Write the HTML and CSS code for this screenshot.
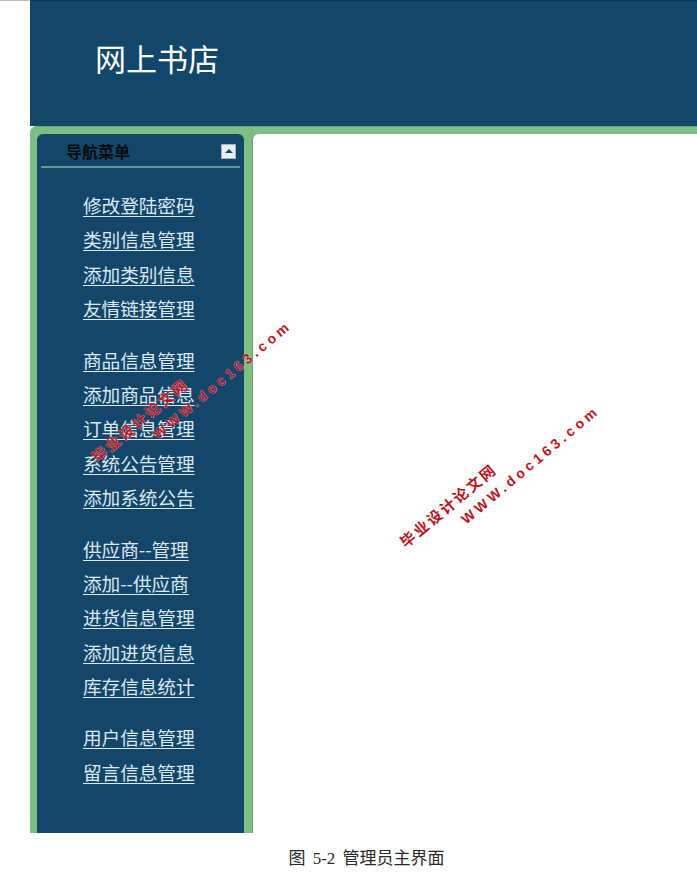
FILE: index.html
```html
<!DOCTYPE html>
<html lang="zh-CN">
<head>
    <meta charset="UTF-8">
    <meta name="viewport" content="width=device-width, initial-scale=1.0">
    <title>网上书店 - 管理员主界面</title>
    <link rel="stylesheet" href="styles.css">
</head>
<body>
    <div class="page">
        <div class="top-rule"></div>
        <div class="frame">
            <header class="banner">
                <h1>网上书店</h1>
            </header>
            <div class="workspace">
                <aside class="sidebar">
                    <div class="menu-head">
                        <span class="menu-title">导航菜单</span>
                        <span class="menu-toggle"></span>
                    </div>
                    <ul class="menu-group first">
                        <li><a href="#">修改登陆密码</a></li>
                        <li><a href="#">类别信息管理</a></li>
                        <li><a href="#">添加类别信息</a></li>
                        <li><a href="#">友情链接管理</a></li>
                    </ul>
                    <ul class="menu-group">
                        <li><a href="#">商品信息管理</a></li>
                        <li><a href="#">添加商品信息</a></li>
                        <li><a href="#">订单信息管理</a></li>
                        <li><a href="#">系统公告管理</a></li>
                        <li><a href="#">添加系统公告</a></li>
                    </ul>
                    <ul class="menu-group">
                        <li><a href="#">供应商--管理</a></li>
                        <li><a href="#">添加--供应商</a></li>
                        <li><a href="#">进货信息管理</a></li>
                        <li><a href="#">添加进货信息</a></li>
                        <li><a href="#">库存信息统计</a></li>
                    </ul>
                    <ul class="menu-group">
                        <li><a href="#">用户信息管理</a></li>
                        <li><a href="#">留言信息管理</a></li>
                    </ul>
                </aside>
                <main class="content"></main>
            </div>
        </div>
        <p class="caption">图 5-2 管理员主界面</p>

        <!-- 水印 -->
        <span class="mark mark-cn mark-a1">毕业设计论文网</span>
        <span class="mark mark-en mark-a2">WWW.doc163.com</span>
        <span class="mark mark-cn mark-b1">毕业设计论文网</span>
        <span class="mark mark-en mark-b2">WWW.doc163.com</span>
    </div>
</body>
</html>
```

FILE: styles.css
```css
body {
    margin: 0;
    padding: 0;
    background-color: #fff;
    font-family: "Noto Sans CJK SC", "Liberation Sans", sans-serif;
}
.page {
    position: relative;
    width: 697px;
    height: 876px;
    overflow: hidden;
}
.top-rule {
    position: absolute;
    left: 0;
    top: 0;
    width: 29px;
    height: 1px;
    background-color: #b9bcc0;
}
.frame {
    margin-left: 30px;
}
.banner {
    height: 126px;
    background-color: #13466b;
    border-top: 1px solid #0e3552;
    box-sizing: border-box;
    padding: 36px 0 0 65px;
}
.banner h1 {
    margin: 0;
    font-size: 31px;
    font-weight: normal;
    line-height: 42px;
    color: #fff;
}
.workspace {
    display: flex;
    height: 707px;
    padding-top: 7px;
    box-sizing: border-box;
    background-color: #7dbf83;
    border-top-left-radius: 7px;
    border-top: 1px solid #6aa774;
}
.sidebar {
    width: 207px;
    margin-left: 7px;
    background-color: #13466b;
    border-top-left-radius: 6px;
    border-top-right-radius: 6px;
}
.menu-head {
    display: flex;
    align-items: center;
    justify-content: space-between;
    height: 32px;
    margin: 0 4px;
    padding: 0 4px 0 25px;
    border-bottom: 2px solid #5a9e88;
}
.menu-title {
    font-size: 16px;
    font-weight: bold;
    color: #0b0b0b;
    margin-top: 2px;
}
.menu-toggle {
    position: relative;
    width: 13px;
    height: 13px;
    background-color: #e9eff4;
    border: 1px solid #9fb3c4;
    margin-top: 2px;
}
.menu-toggle::after {
    content: "";
    position: absolute;
    left: 3px;
    top: 4px;
    border-left: 4px solid transparent;
    border-right: 4px solid transparent;
    border-bottom: 4px solid #1d4566;
}
.menu-group {
    list-style-type: none;
    margin: 17px 0 0 0;
    padding: 0 0 0 46px;
}
.menu-group.first {
    margin-top: 20px;
}
.menu-group li {
    height: 34.4px;
    line-height: 34.4px;
}
.menu-group a {
    font-size: 18.7px;
    color: #dde8f1;
    text-decoration: underline;
    text-underline-offset: 3px;
    letter-spacing: -0.1px;
}
.content {
    flex: 1;
    margin-left: 8px;
    background-color: #fff;
    border-top-left-radius: 6px;
    border-left: 1px solid #6b9c78;
}
.caption {
    margin: 11px 0 0 36px;
    text-align: center;
    font-family: "Liberation Serif", "Noto Sans CJK SC", serif;
    font-size: 17px;
    word-spacing: 3px;
    color: #2a2a2a;
}
.mark {
    position: absolute;
    font-weight: bold;
    color: #c0121e;
    line-height: 16px;
    white-space: nowrap;
    transform-origin: 0 50%;
    transform: rotate(-40deg);
    text-shadow: 0 0 1px #fff;
}
.mark-cn {
    font-size: 15px;
    letter-spacing: 2.2px;
}
.mark-en {
    font-family: "Liberation Sans", sans-serif;
    font-size: 14px;
    letter-spacing: 3.7px;
}
.mark-a1 { left: 94px; top: 451px; }
.mark-a2 { left: 155px; top: 428px; }
.mark-b1 { left: 402px; top: 536px; }
.mark-b2 { left: 463px; top: 513px; }
```
